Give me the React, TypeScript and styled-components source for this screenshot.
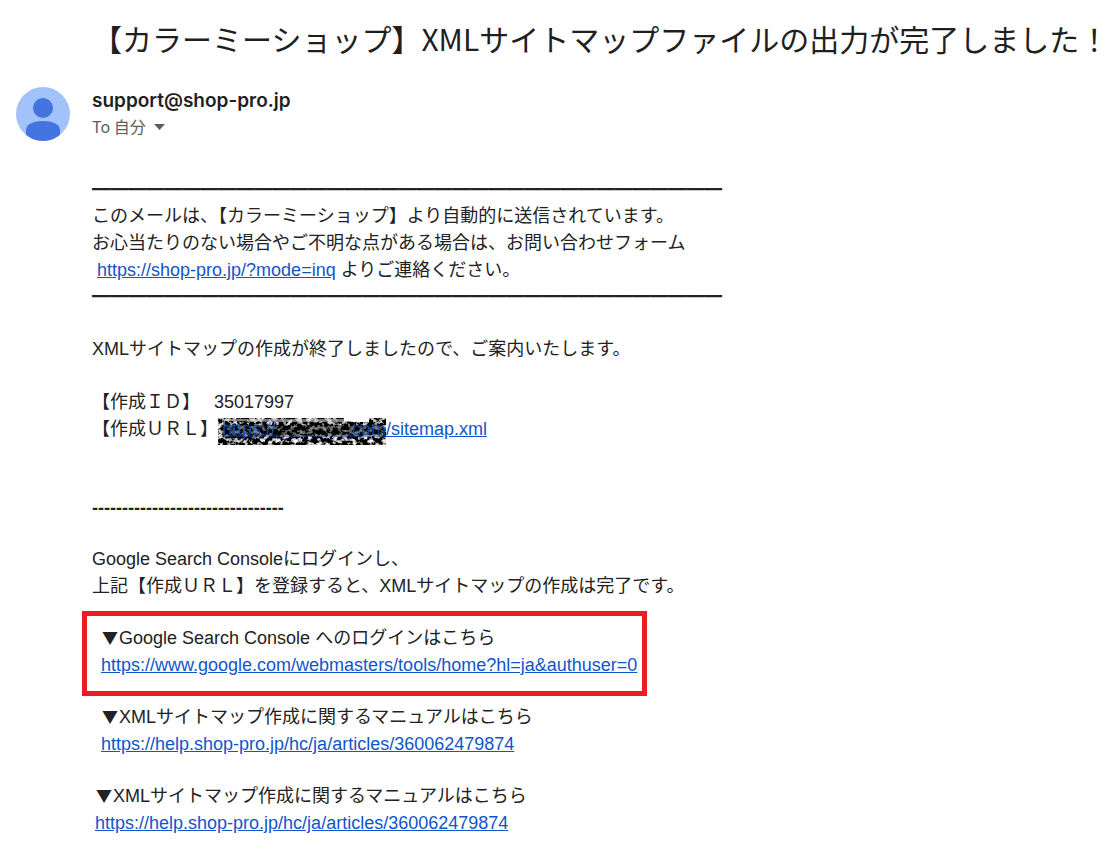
import React from "react";
import styled, { createGlobalStyle } from "styled-components";

const GlobalStyle = createGlobalStyle`
  * { box-sizing: border-box; }
  body {
    margin: 0;
    background: #fff;
    color: #222;
    font-family: "Liberation Sans", "Noto Sans CJK JP", sans-serif;
  }
`;

const Message = styled.main`
  display: grid;
  grid-template-columns: 76px minmax(0, 1fr);
  padding: 16px 0 21px 16px;
`;

const Subject = styled.h1`
  grid-column: 2;
  margin: 0;
  font: 400 30px/44px "Noto Sans CJK JP", sans-serif;
  color: #1f1f1f;
  white-space: nowrap;
`;

const Avatar = styled.svg`
  width: 54px;
  height: 54px;
  margin-top: 27px;
`;

const Sender = styled.header`
  padding-top: 28px;
`;

const Address = styled.div`
  font: 600 19px/25px Inter, sans-serif;
  color: #1f1f1f;
`;

const Recipient = styled.button`
  display: flex;
  align-items: center;
  gap: 8px;
  padding: 0;
  border: 0;
  background: none;
  font: 400 16px/26px "Noto Sans CJK JP", sans-serif;
  color: #5e5e5e;
`;

const Caret = styled.svg`
  width: 11px;
  height: 8px;
`;

const Body = styled.article`
  grid-column: 2;
  display: flex;
  flex-direction: column;
  gap: 26px;
  margin-top: 36px;
  font-size: 18px;
  line-height: 27px;
`;

const Paragraph = styled.p<{ $indent?: number }>`
  margin: 0;
  padding-left: ${(p) => p.$indent ?? 0}px;
`;

const Rule = styled.div<{ $bold?: boolean }>`
  line-height: 26px;
  font-weight: ${(p) => (p.$bold ? 700 : 400)};
  white-space: nowrap;
`;

const Guide = styled.section`
  display: flex;
  flex-direction: column;
  gap: 25px;
  margin-top: 26px;
`;

const Steps = styled.div`
  display: flex;
  flex-direction: column;
  gap: 8px;
`;

const Highlight = styled.div`
  width: 100%;
  max-width: 565px;
  margin: -14px 0 0 -10px;
  padding: 9px 0 12px 14px;
  border: 5px solid #ed1c24;
`;

const Marker = styled.span`
  padding: 0 1px;
  font: 400 16px/16px "Noto Sans CJK JP", sans-serif;
`;

const Link = styled.a`
  color: #1155cc;
  text-decoration: underline;
`;

const Redacted = styled.span`
  position: relative;
  display: inline-flex;
  justify-content: space-between;
  width: 168px;
  height: 27px;
  padding-left: 4px;
  vertical-align: top;
`;

const Grain = styled.svg`
  position: absolute;
  inset: 2px 0 -2px 0;
  width: 168px;
  height: 27px;
`;

const Covered = styled.span`
  position: relative;
  opacity: 0.8;
`;

const rule = "━".repeat(35);
const manual = "https://help.shop-pro.jp/hc/ja/articles/360062479874";
const consoleUrl = "https://www.google.com/webmasters/tools/home?hl=ja&authuser=0";

export default function App() {
  return (
    <>
      <GlobalStyle />
      <Message>
        <Subject>【カラーミーショップ】XMLサイトマップファイルの出力が完了しました！</Subject>
        <Avatar viewBox="0 0 54 54" aria-hidden="true">
          <defs>
            <clipPath id="face"><circle cx="27" cy="27" r="27" /></clipPath>
          </defs>
          <g clipPath="url(#face)">
            <rect width="54" height="54" fill="#a1c2fa" />
            <circle cx="27" cy="21" r="10" fill="#4374e0" />
            <path d="M10 54V43C10 37 18 34 27 34S44 37 44 43V54Z" fill="#4374e0" />
          </g>
        </Avatar>
        <Sender>
          <Address>support@shop-pro.jp</Address>
          <Recipient type="button">
            To 自分
            <Caret viewBox="0 0 11 8" aria-hidden="true"><path d="M0 2H11L5.5 8Z" fill="#5e5e5e" /></Caret>
          </Recipient>
        </Sender>
        <Body>
          <div>
            <Rule>{rule}</Rule>
            <Paragraph>
              このメールは、【カラーミーショップ】より自動的に送信されています。<br />
              お心当たりのない場合やご不明な点がある場合は、お問い合わせフォーム<br />
              &nbsp;<Link href="https://shop-pro.jp/?mode=inq">https://shop-pro.jp/?mode=inq</Link> よりご連絡ください。
            </Paragraph>
            <Rule>{rule}</Rule>
          </div>
          <Paragraph>XMLサイトマップの作成が終了しましたので、ご案内いたします。</Paragraph>
          <Paragraph>
            【作成ＩＤ】　&nbsp;35017997<br />
            【作成ＵＲＬ】
            <Link href="#sitemap">
              <Redacted>
                <Grain aria-hidden="true">
                  <filter id="grain" x="0" y="0" width="100%" height="100%">
                    <feTurbulence type="fractalNoise" baseFrequency="0.2 0.24" numOctaves="3" seed="7" />
                    <feColorMatrix values="3.6 0 0 0 -1.75  3.6 0 0 0 -1.75  3.6 0 0 0 -1.75  0 0 0 0 1" />
                  </filter>
                  <rect width="168" height="27" filter="url(#grain)" />
                  <path d="M4 7H164V17H4Z" fill="#000" opacity="0.45" />
                  <path d="M4 1H128V4H60L4 3Z" fill="#ccc" opacity="0.6" />
                  <path d="M126 0H151V4H136L126 3Z" fill="#fff" />
                  <path d="M4 18H168" stroke="#1a4a9c" />
                </Grain>
                <Covered>https://</Covered>
                <Covered>.com</Covered>
              </Redacted>
              /sitemap.xml
            </Link>
          </Paragraph>
          <Guide>
            <Rule $bold>{"-".repeat(32)}</Rule>
            <Paragraph>
              Google Search Consoleにログインし、<br />
              上記【作成ＵＲＬ】を登録すると、XMLサイトマップの作成は完了です。
            </Paragraph>
            <Steps>
              <Highlight>
                <Paragraph>
                  <Marker>▼</Marker>Google Search Console へのログインはこちら<br />
                  <Link href={consoleUrl}>{consoleUrl}</Link>
                </Paragraph>
              </Highlight>
              <Paragraph $indent={9}>
                <Marker>▼</Marker>XMLサイトマップ作成に関するマニュアルはこちら<br />
                <Link href={manual}>{manual}</Link>
              </Paragraph>
            </Steps>
            <Paragraph $indent={3}>
              <Marker>▼</Marker>XMLサイトマップ作成に関するマニュアルはこちら<br />
              <Link href={manual}>{manual}</Link>
            </Paragraph>
          </Guide>
        </Body>
      </Message>
    </>
  );
}
